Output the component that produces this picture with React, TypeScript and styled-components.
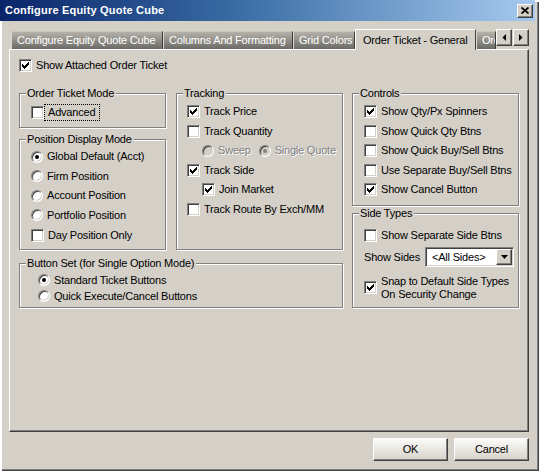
import { FC, ReactNode } from "react";
import styled, { createGlobalStyle } from "styled-components";

const GlobalStyle = createGlobalStyle`
  html, body {
    margin: 0;
    padding: 0;
    background: #d4d0c8;
  }
  body {
    font-family: "Liberation Sans", Arial, sans-serif;
    font-size: 11px;
    line-height: 13px;
    letter-spacing: -0.2px;
    color: #000;
  }
`;

// classic 7x7 check glyph, drawn pixel by pixel
const Check: FC<{ checked?: boolean }> = ({ checked }) => (
  <CheckBox>
    {checked && (
      <svg width="11" height="11" viewBox="0 0 11 11" shapeRendering="crispEdges">
        <path
          d="M2 4h1v3H2zM3 5h1v3H3zM4 6h1v3H4zM5 5h1v3H5zM6 4h1v3H6zM7 3h1v3H7zM8 2h1v3H8z"
          fill="#000"
        />
      </svg>
    )}
  </CheckBox>
);

const Radio: FC<{ checked?: boolean; disabled?: boolean }> = ({ checked, disabled }) => (
  <RadioBox $disabled={disabled}>{checked && <Dot $disabled={disabled} />}</RadioBox>
);

const CheckItem: FC<{ label: ReactNode; checked?: boolean; indent?: number; h?: number }> = ({
  label,
  checked,
  indent,
  h,
}) => (
  <Option $indent={indent} $h={h}>
    <Check checked={checked} />
    <Label>{label}</Label>
  </Option>
);

const RadioItem: FC<{ label: string; checked?: boolean; h?: number }> = ({ label, checked, h }) => (
  <Option $h={h}>
    <Radio checked={checked} />
    <Label>{label}</Label>
  </Option>
);

const Group: FC<{
  title: string;
  w: number;
  h: number;
  pt: number;
  pl: number;
  children: ReactNode;
}> = ({ title, w, h, pt, pl, children }) => (
  <Frame $w={w} $h={h} $pt={pt} $pl={pl}>
    <Caption>{title}</Caption>
    {children}
  </Frame>
);

const Triangle: FC<{ dir: "left" | "right" | "down" }> = ({ dir }) => {
  const d =
    dir === "left" ? "M4 0v7L0.5 3.5z" : dir === "right" ? "M0 0v7l3.5-3.5z" : "M0 0h7L3.5 4z";
  const size = dir === "down" ? { width: 7, height: 4 } : { width: 4, height: 7 };
  return (
    <svg {...size} viewBox={`0 0 ${size.width} ${size.height}`}>
      <path d={d} fill="#000" />
    </svg>
  );
};

const tabs = [
  { label: "Configure Equity Quote Cube", w: 152 },
  { label: "Columns And Formatting", w: 130 },
  { label: "Grid Colors", w: 62 },
  { label: "Order Ticket - General", w: 121, active: true },
  { label: "Ord", w: 20 },
];

export default function App() {
  return (
    <>
      <GlobalStyle />
      <Window>
        <TitleBar>
          <span>Configure Equity Quote Cube</span>
          <CloseButton>
            <svg width="8" height="7" viewBox="0 0 8 7">
              <path d="M0.5 0.5L7.5 6.5M7.5 0.5L0.5 6.5" stroke="#000" strokeWidth="1.7" />
            </svg>
          </CloseButton>
        </TitleBar>

        <Body>
          <TabRow>
            <TabList>
              {tabs.map(t => (
                <Tab key={t.label} $w={t.w} $active={t.active}>
                  {t.label}
                </Tab>
              ))}
            </TabList>
            <Arrows>
              <ArrowButton>
                <Triangle dir="left" />
              </ArrowButton>
              <ArrowButton>
                <Triangle dir="right" />
              </ArrowButton>
            </Arrows>
          </TabRow>

          <Panel>
            <CheckItem label="Show Attached Order Ticket" checked h={16} />

            <Columns>
              <LeftBlock>
                <TopRow>
                  <LeftCol>
                    <Group title="Order Ticket Mode" w={147} h={35} pt={9} pl={11}>
                      <Option>
                        <Check />
                        <Focus>Advanced</Focus>
                      </Option>
                    </Group>
                    <Group title="Position Display Mode" w={147} h={111} pt={7} pl={11}>
                      <RadioItem label="Global Default (Acct)" checked />
                      <RadioItem label="Firm Position" />
                      <RadioItem label="Account Position" />
                      <RadioItem label="Portfolio Position" />
                      <Spaced>
                        <CheckItem label="Day Position Only" />
                      </Spaced>
                    </Group>
                  </LeftCol>

                  <Group title="Tracking" w={167} h={157} pt={8} pl={10}>
                    <CheckItem label="Track Price" checked />
                    <CheckItem label="Track Quantity" />
                    <Option $indent={15}>
                      <Choice>
                        <Radio disabled />
                        <Label $disabled>Sweep</Label>
                      </Choice>
                      <Choice $gap>
                        <Radio disabled checked />
                        <Label $disabled>Single Quote</Label>
                      </Choice>
                    </Option>
                    <CheckItem label="Track Side" checked />
                    <CheckItem label="Join Market" checked indent={15} />
                    <CheckItem label="Track Route By Exch/MM" />
                  </Group>
                </TopRow>

                <ButtonSet>
                  <Group title="Button Set (for Single Option Mode)" w={324} h={45} pt={8} pl={18}>
                    <RadioItem label="Standard Ticket Buttons" checked h={16} />
                    <RadioItem label="Quick Execute/Cancel Buttons" h={16} />
                  </Group>
                </ButtonSet>
              </LeftBlock>

              <RightCol>
                <Group title="Controls" w={167} h={113} pt={8} pl={11}>
                  <CheckItem label="Show Qty/Px Spinners" checked />
                  <CheckItem label="Show Quick Qty Btns" />
                  <CheckItem label="Show Quick Buy/Sell Btns" />
                  <CheckItem label="Use Separate Buy/Sell Btns" />
                  <CheckItem label="Show Cancel Button" checked />
                </Group>
                <Group title="Side Types" w={167} h={95} pt={12} pl={11}>
                  <CheckItem label="Show Separate Side Btns" />
                  <ComboRow>
                    <ComboLabel>Show Sides</ComboLabel>
                    <Combo>
                      <ComboText>&lt;All Sides&gt;</ComboText>
                      <ComboButton>
                        <Triangle dir="down" />
                      </ComboButton>
                    </Combo>
                  </ComboRow>
                  <SnapRow>
                    <Check checked />
                    <Label>
                      Snap to Default Side Types
                      <br />
                      On Security Change
                    </Label>
                  </SnapRow>
                </Group>
              </RightCol>
            </Columns>
          </Panel>

          <Footer>
            <PushButton>OK</PushButton>
            <PushButton>Cancel</PushButton>
          </Footer>
        </Body>
      </Window>
    </>
  );
}

const Window = styled.div`
  width: 539px;
  height: 471px;
  box-sizing: border-box;
  display: flex;
  flex-direction: column;
  overflow: hidden;
  background: #d4d0c8;
  box-shadow: inset 2px 2px 0 #fff, inset -1px -1px 0 #404040, inset -2px -2px 0 #808080;
`;

const TitleBar = styled.div`
  display: flex;
  align-items: center;
  height: 21px;
  margin-right: 4px;
  padding: 0 2px 0 5px;
  background: linear-gradient(90deg, #0a246a 0%, #3a6ea5 45%, #a6caf0 100%);
  color: #fff;
  font-weight: bold;
  font-size: 11px;
  letter-spacing: 0.2px;
  white-space: nowrap;
`;

const Raised = styled.div`
  box-sizing: border-box;
  background: #d4d0c8;
  border: 1px solid;
  border-color: #fff #404040 #404040 #fff;
  box-shadow: inset -1px -1px 0 #808080;
  display: flex;
  align-items: center;
  justify-content: center;
`;

const CloseButton = styled(Raised)`
  margin-left: auto;
  width: 16px;
  height: 14px;
`;

const Body = styled.div`
  flex: 1;
  display: flex;
  flex-direction: column;
  padding: 8px 10px 0 9px;
`;

const TabRow = styled.div`
  display: flex;
  height: 20px;
  padding-left: 2px;
`;

const TabList = styled.div`
  display: flex;
  align-items: flex-end;
`;

const Tab = styled.div<{ $w: number; $active?: boolean }>`
  position: relative;
  z-index: ${p => (p.$active ? 1 : 0)};
  flex: none;
  width: ${p => p.$w}px;
  height: ${p => (p.$active ? 21 : 18)}px;
  margin-bottom: ${p => (p.$active ? -1 : 0)}px;
  box-sizing: border-box;
  overflow: hidden;
  white-space: nowrap;
  display: flex;
  align-items: center;
  padding-left: ${p => (p.$active ? 7 : 5)}px;
  border-top: 1px solid ${p => (p.$active ? "#fff" : "#c8c6c0")};
  border-left: 1px solid ${p => (p.$active ? "#fff" : "#d8d6d0")};
  border-right: 1px solid ${p => (p.$active ? "#404040" : "#3c3b38")};
  background: ${p => (p.$active ? "#d4d0c8" : "linear-gradient(#b4b1aa, #6c6a66)")};
  color: ${p => (p.$active ? "#000" : "#fff")};
`;

const Arrows = styled.div`
  display: flex;
  gap: 1px;
  margin-left: auto;
`;

const ArrowButton = styled(Raised)`
  width: 16px;
  height: 17px;
`;

const Panel = styled.div`
  height: 383px;
  box-sizing: border-box;
  padding: 7px 9px 0 9px;
  border: 1px solid;
  border-color: #fff #404040 #404040 #fff;
  box-shadow: inset -1px -1px 0 #808080;
`;

const Columns = styled.div`
  display: flex;
  gap: 9px;
  margin-top: 20px;
`;

const LeftBlock = styled.div`
  display: flex;
  flex-direction: column;
  width: 324px;
`;

const TopRow = styled.div`
  display: flex;
  gap: 10px;
`;

const LeftCol = styled.div`
  display: flex;
  flex-direction: column;
  gap: 11px;
`;

const RightCol = styled.div`
  display: flex;
  flex-direction: column;
  gap: 7px;
`;

const ButtonSet = styled.div`
  margin-top: 13px;
`;

const Frame = styled.div<{ $w: number; $h: number; $pt: number; $pl: number }>`
  position: relative;
  flex: none;
  box-sizing: border-box;
  width: ${p => p.$w}px;
  height: ${p => p.$h}px;
  padding: ${p => p.$pt}px 0 0 ${p => p.$pl}px;
  border: 1px solid #808080;
  box-shadow: 1px 1px 0 #fff, inset 1px 1px 0 #fff;
`;

const Caption = styled.span`
  position: absolute;
  top: -7px;
  left: 6px;
  padding: 0 2px 0 1px;
  line-height: 13px;
  background: #d4d0c8;
  white-space: nowrap;
`;

const Option = styled.div<{ $indent?: number; $h?: number }>`
  display: flex;
  align-items: center;
  gap: 4px;
  height: ${p => p.$h ?? 19.5}px;
  margin-left: ${p => p.$indent ?? 0}px;
  white-space: nowrap;
`;

const Spaced = styled.div`
  margin-top: 1px;
`;

const Choice = styled.span<{ $gap?: boolean }>`
  display: inline-flex;
  align-items: center;
  gap: 4px;
  margin-left: ${p => (p.$gap ? 4 : 0)}px;
`;

const Label = styled.span<{ $disabled?: boolean }>`
  color: ${p => (p.$disabled ? "#808080" : "#000")};
  text-shadow: ${p => (p.$disabled ? "1px 1px 0 #fff" : "none")};
`;

const Focus = styled.span`
  margin-left: -4px;
  padding: 1px 4px 1px 3px;
  border: 1px dotted #000;
`;

const CheckBox = styled.span`
  flex: none;
  width: 13px;
  height: 13px;
  box-sizing: border-box;
  background: #fff;
  border: 1px solid;
  border-color: #808080 #fff #fff #808080;
  box-shadow: inset 1px 1px 0 #404040, inset -1px -1px 0 #d4d0c8;

  & svg {
    display: block;
  }
`;

const RadioBox = styled.span<{ $disabled?: boolean }>`
  position: relative;
  flex: none;
  width: 12px;
  height: 12px;
  box-sizing: border-box;
  border-radius: 50%;
  background: ${p => (p.$disabled ? "#d4d0c8" : "#fff")};
  border: 1px solid;
  border-color: #808080 #fff #fff #808080;
  box-shadow: inset 1px 1px 0 #404040, inset -1px -1px 0 #d4d0c8;
`;

const Dot = styled.span<{ $disabled?: boolean }>`
  position: absolute;
  left: 3px;
  top: 3px;
  width: 4px;
  height: 4px;
  border-radius: 50%;
  background: ${p => (p.$disabled ? "#808080" : "#000")};
`;

const ComboRow = styled.div`
  display: flex;
  align-items: center;
  height: 21px;
  margin-top: 1px;
`;

const ComboLabel = styled.span`
  flex: none;
  width: 61px;
`;

const Combo = styled.div`
  display: flex;
  align-items: center;
  width: 89px;
  height: 20px;
  box-sizing: border-box;
  padding: 1px;
  background: #fff;
  border: 1px solid;
  border-color: #808080 #fff #fff #808080;
  box-shadow: inset 1px 1px 0 #404040, inset -1px -1px 0 #d4d0c8;
`;

const ComboText = styled.span`
  flex: 1;
  padding-left: 5px;
`;

const ComboButton = styled(Raised)`
  width: 16px;
  height: 16px;
`;

const SnapRow = styled.div`
  display: flex;
  align-items: center;
  gap: 4px;
  height: 28px;
  margin-top: 6px;
`;

const Footer = styled.div`
  display: flex;
  justify-content: flex-end;
  gap: 6px;
  margin-top: 6px;
`;

const PushButton = styled.div`
  width: 75px;
  height: 23px;
  box-sizing: border-box;
  display: flex;
  align-items: center;
  justify-content: center;
  background: linear-gradient(#fbfbf9, #e6e4de 55%, #d6d3cb);
  border: 1px solid;
  border-color: #fff #404040 #404040 #fff;
  box-shadow: inset -1px -1px 0 #808080;
`;
